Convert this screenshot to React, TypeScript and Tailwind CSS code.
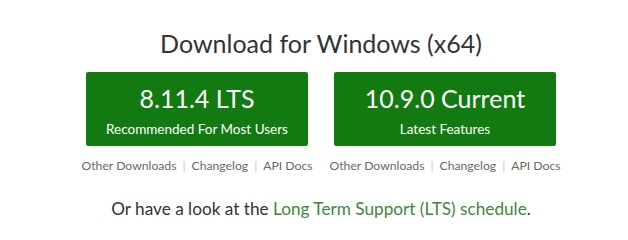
const font = { fontFamily: 'Lato, "Open Sans", sans-serif' }

function DownloadButton({ version, label }: { version: string; label: string }) {
  return (
    <div className="flex w-[222px] flex-col items-center">
      <a
        href="#"
        className="flex h-[74px] w-[222px] flex-col items-center justify-center rounded-[2px] bg-[#137a12] pt-[2px] text-white"
      >
        <span className="text-[25px] leading-[30px]">{version}</span>
        <span className="mt-[8px] text-[13.5px] leading-[16px]">{label}</span>
      </a>
      <div className="mt-[12px] flex items-center whitespace-nowrap text-[12.2px] leading-[16px] text-[#666b63]">
        <a href="#">Other Downloads</a>
        <span className="mx-[6px] text-[#c5c9c3]">|</span>
        <a href="#">Changelog</a>
        <span className="mx-[6px] text-[#c5c9c3]">|</span>
        <a href="#">API Docs</a>
      </div>
    </div>
  )
}

export default function App() {
  return (
    <div className="flex h-[240px] w-[628px] flex-col items-center bg-white pl-[14px]" style={font}>
      <h2 className="mt-[26px] text-[25px] leading-[34px] text-[#333]">Download for Windows (x64)</h2>
      <div className="mt-[12px] flex gap-[26px]">
        <DownloadButton version="8.11.4 LTS" label="Recommended For Most Users" />
        <DownloadButton version="10.9.0 Current" label="Latest Features" />
      </div>
      <p className="mt-[24px] text-[17.2px] leading-[22px] text-[#333]">
        Or have a look at the{' '}
        <a href="#" className="text-[#43853d]">
          Long Term Support (LTS) schedule
        </a>
        .
      </p>
    </div>
  )
}
